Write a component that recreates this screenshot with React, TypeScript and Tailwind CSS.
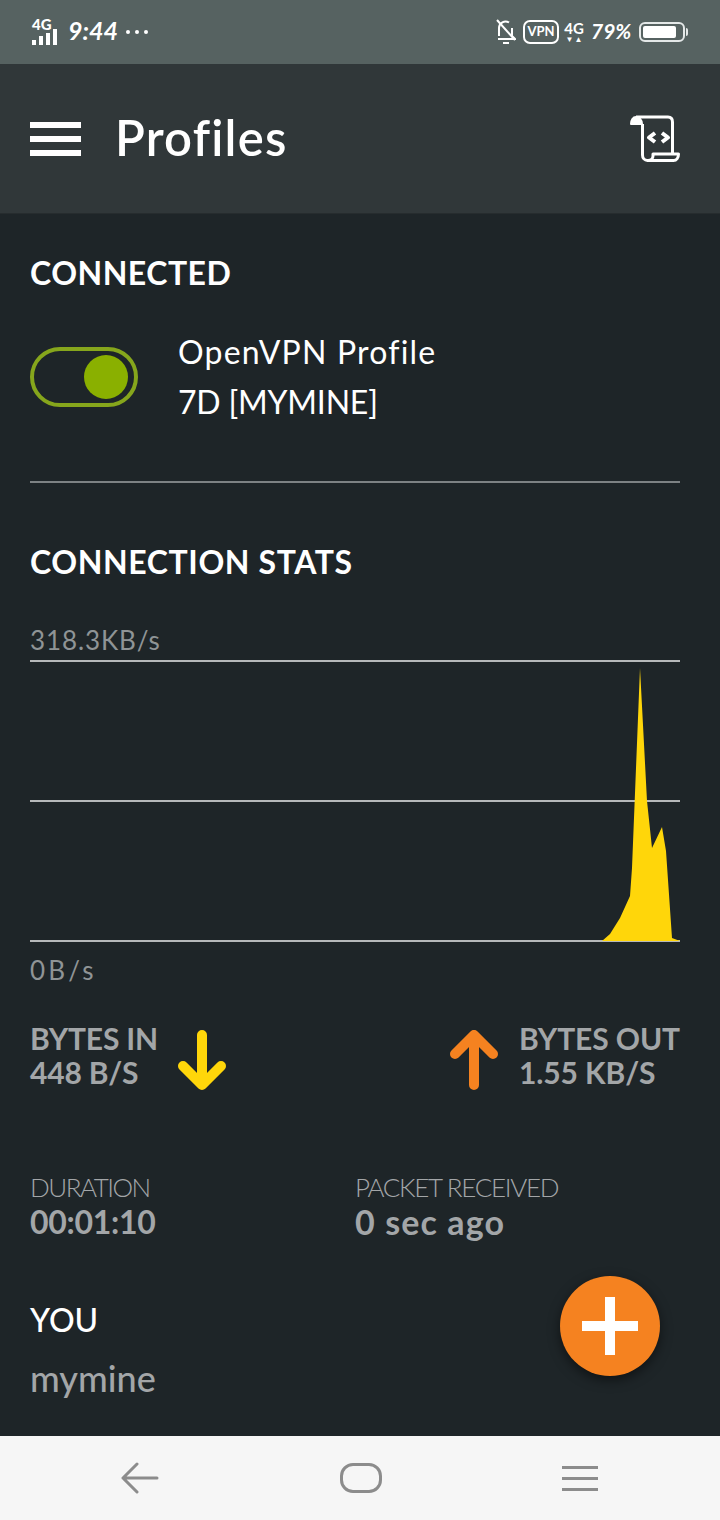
const font = { fontFamily: "Lato, sans-serif" };

const StatusBar = () => (
  <div className="h-16 bg-[#566261] flex items-center justify-between pl-8 pr-[35px] text-white">
    <div className="flex items-center">
      <div className="relative w-7 h-[26px]">
        <span className="absolute left-0 top-[-3px] text-[15px] font-black leading-4">4G</span>
        <div className="absolute left-0 bottom-0 flex items-end gap-[3px]">
          <div className="w-[4px] h-[5px] bg-white" />
          <div className="w-[4px] h-[9px] bg-white" />
          <div className="w-[4px] h-[12px] bg-white" />
          <div className="w-[4px] h-[16px] bg-white" />
        </div>
      </div>
      <span className="ml-[8px] mb-[3px] text-[25px] font-bold italic leading-none">9:44</span>
      <div className="ml-[8px] flex gap-[5px]">
        <div className="w-[4px] h-[4px] rounded-full bg-white" />
        <div className="w-[4px] h-[4px] rounded-full bg-white" />
        <div className="w-[4px] h-[4px] rounded-full bg-white" />
      </div>
    </div>
    <div className="flex items-center">
      <svg width="20" height="26" viewBox="0 0 20 26" fill="none" stroke="white" strokeWidth="2">
        <path d="M3 17V9a6.500 6.500 0 0 1 10-5.500M16 9v8l3 3H2" />
        <path d="M1 1l18 20" />
        <path d="M7 24h6" />
      </svg>
      <div className="ml-[7px] w-[36px] h-[24px] border-2 border-white rounded-[7px] flex items-center justify-center text-[13px] font-bold">VPN</div>
      <div className="ml-[6px] w-[18px] flex flex-col items-center">
        <span className="text-[15px] font-bold leading-[14px]">4G</span>
        <div className="flex gap-[1px] text-[8px] leading-[8px]">
          <span>▼</span>
          <span>▲</span>
        </div>
      </div>
      <span className="ml-[8px] mb-[3px] w-[40px] text-[21px] font-bold italic leading-none">79%</span>
      <div className="ml-[8px] w-[46px] h-[20px] border-2 border-[#e4e8e8] rounded-[6px] p-[2px] relative">
        <div className="h-full w-[33px] bg-white rounded-[2px]" />
        <div className="absolute right-[-5px] top-[4px] w-[2px] h-[8px] bg-[#e4e8e8] rounded-r" />
      </div>
    </div>
  </div>
);

const AppBar = () => (
  <div className="h-[150px] bg-[#303739] border-b border-[#262c2e] flex items-center justify-between pl-[30px] pr-10 text-white">
    <div className="flex items-center">
      <div className="w-[51px] flex flex-col gap-[8px]">
        <div className="h-[6px] bg-white" />
        <div className="h-[6px] bg-white" />
        <div className="h-[6px] bg-white" />
      </div>
      <span className="ml-[34px] mb-[2px] text-[49px] font-semibold leading-none tracking-[1.2px]">Profiles</span>
    </div>
    <svg width="50" height="48" viewBox="0 0 50 48" fill="none" stroke="white" strokeWidth="3" strokeLinejoin="round">
      <path d="M6 2h32c3 0 4.500 2 4.500 5v32" />
      <path d="M1 9c0-4 2-7 5-7s6 3 6 7z" fill="white" strokeWidth="2" />
      <path d="M12.500 9v31c0 3 2 5.500 5 5.500h26c3 0 5-3 5-6.500H23v2c0 2.500-2 4.500-5 4.500" />
      <path d="M25 18l-6 4.500 6 4.500M32 18l6 4.500-6 4.500" strokeWidth="4" />
    </svg>
  </div>
);

const Chart = () => (
  <svg width="650" height="284" viewBox="0 0 650 284" className="block">
    <rect x="0" y="0" width="650" height="2" fill="#b6b9ba" />
    <rect x="0" y="140" width="650" height="2" fill="#b6b9ba" />
    <rect x="0" y="280" width="650" height="2" fill="#b6b9ba" />
    <path
      d="M572 281L580 274L590 258L600 236L602 208L610 8L617 141L622 188L632 167L636 191L642 278L650 281Z"
      fill="#ffd60a"
    />
  </svg>
);

export default function App() {
  return (
    <div className="relative w-[720px] h-[1520px] bg-[#1e2528] overflow-hidden flex flex-col" style={font}>
      <StatusBar />
      <AppBar />
      <main className="flex-1 pl-[30px] pr-10 text-white">
        <h2 className="mt-[40px] text-[32px] font-bold leading-[38px] tracking-[0.5px]">CONNECTED</h2>
        <div className="mt-[35px] flex items-center">
          <div className="w-[108px] h-[60px] rounded-full border-4 border-[#86a61c] flex items-center justify-end pr-[6px]">
            <div className="w-[44px] h-[44px] rounded-full bg-[#8ab000]" />
          </div>
          <div className="ml-10 text-[32px] leading-[50px]">
            <div className="tracking-[1.2px]">OpenVPN Profile</div>
            <div className="tracking-[-0.2px]">7D [MYMINE]</div>
          </div>
        </div>
        <div className="mt-[54px] h-[2px] bg-[#7d8284]" />
        <h2 className="mt-[60px] text-[32px] font-bold leading-[38px] tracking-[0.6px]">CONNECTION STATS</h2>
        <div className="mt-[43px] text-[26px] leading-[32px] text-[#8f9496] tracking-[0.9px]">318.3KB/s</div>
        <div className="mt-[4px]">
          <Chart />
        </div>
        <div className="mt-[10px] text-[26px] leading-[32px] text-[#8f9496] tracking-[3.2px]">0B/s</div>

        <div className="mt-[35px] flex justify-between">
          <div className="flex items-start">
            <div className="text-[30px] font-bold leading-[34px] text-[#a3a6a8] tracking-[-0.2px]">
              <div>BYTES IN</div>
              <div>448 B/S</div>
            </div>
            <svg width="50" height="62" viewBox="0 0 50 62" className="ml-[19px] mt-[8px]" fill="none" stroke="#ffd60a" strokeWidth="10" strokeLinecap="round" strokeLinejoin="round">
              <path d="M25 6V56M6 37L25 56L44 37" />
            </svg>
          </div>
          <div className="flex items-start">
            <svg width="50" height="62" viewBox="0 0 50 62" className="mr-[20px] mt-[8px]" fill="none" stroke="#f58220" strokeWidth="10" strokeLinecap="round" strokeLinejoin="round">
              <path d="M25 56V6M6 25L25 6L44 25" />
            </svg>
            <div className="text-[30px] font-bold leading-[34px] text-[#a3a6a8] tracking-[-0.1px]">
              <div>BYTES OUT</div>
              <div>1.55 KB/S</div>
            </div>
          </div>
        </div>

        <div className="mt-[80px] flex">
          <div className="w-[325px]">
            <div className="text-[26px] font-light leading-[32px] text-[#a3a6a8] tracking-[-1.5px]">DURATION</div>
            <div className="text-[32px] font-bold leading-[38px] text-[#a3a6a8] tracking-[-0.3px]">00:01:10</div>
          </div>
          <div>
            <div className="text-[26px] font-light leading-[32px] text-[#a3a6a8] tracking-[-1.3px]">PACKET RECEIVED</div>
            <div className="text-[34px] font-bold leading-[38px] text-[#a3a6a8] tracking-[1.1px]">0 sec ago</div>
          </div>
        </div>

        <h2 className="mt-[60px] text-[32px] font-medium leading-[38px]">YOU</h2>
        <div className="mt-[20px] text-[36px] font-medium leading-[38px] text-[#a3a6a8]">mymine</div>
      </main>

      <button className="absolute left-[560px] top-[1276px] w-[100px] h-[100px] rounded-full bg-[#f58220] shadow-[0_4px_12px_rgba(0,0,0,0.5)] flex items-center justify-center">
        <svg width="56" height="58" viewBox="0 0 56 58" fill="white">
          <rect x="23" y="0" width="10" height="58" />
          <rect x="0" y="24" width="56" height="10" />
        </svg>
      </button>

      <nav className="h-[84px] bg-[#f6f6f6] flex items-center justify-between pl-[120px] pr-[122px]">
        <svg width="40" height="32" viewBox="0 0 40 32" fill="none" stroke="#8c8c8c" strokeWidth="3" strokeLinecap="round" strokeLinejoin="round">
          <path d="M37 16H3M17 2L3 16L17 30" />
        </svg>
        <div className="w-[42px] h-[30px] rounded-[13px] border-[3px] border-[#8c8c8c]" />
        <div className="w-[36px] flex flex-col gap-[8px]">
          <div className="h-[3px] bg-[#8c8c8c]" />
          <div className="h-[3px] bg-[#8c8c8c]" />
          <div className="h-[3px] bg-[#8c8c8c]" />
        </div>
      </nav>
    </div>
  );
}
